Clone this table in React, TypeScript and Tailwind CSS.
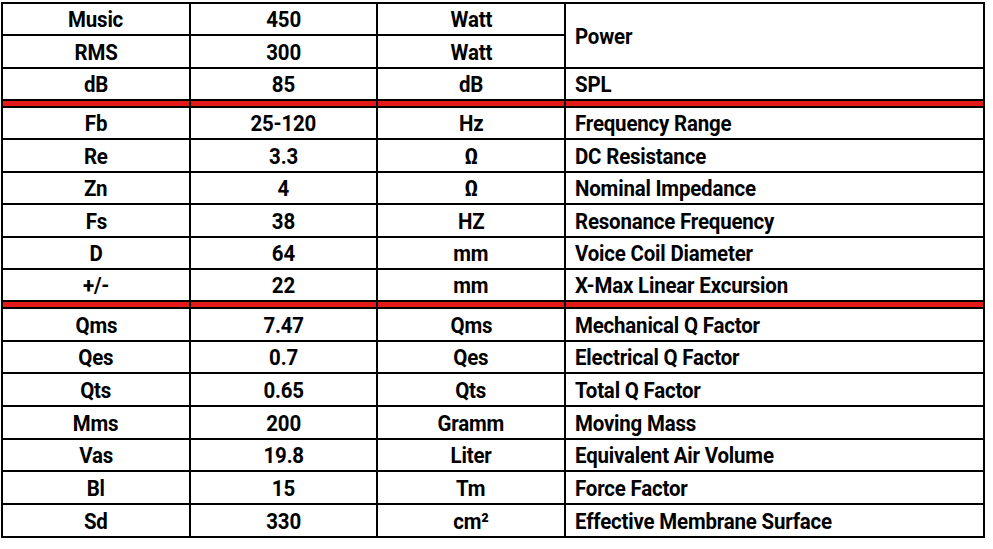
const font = { fontFamily: "Roboto, 'Liberation Sans', sans-serif" };

type Row = { a: string; b: string; c: string; d?: string; h: string };

const top: Row[] = [
  { a: "Music", b: "450", c: "Watt", h: "h-[30px]" },
  { a: "RMS", b: "300", c: "Watt", h: "h-[31px]" },
  { a: "dB", b: "85", c: "dB", d: "SPL", h: "h-[30px]" },
];

const mid: Row[] = [
  { a: "Fb", b: "25-120", c: "Hz", d: "Frequency Range", h: "h-[30px]" },
  { a: "Re", b: "3.3", c: "Ω", d: "DC Resistance", h: "h-[31px]" },
  { a: "Zn", b: "4", c: "Ω", d: "Nominal Impedance", h: "h-[30px]" },
  { a: "Fs", b: "38", c: "HZ", d: "Resonance Frequency", h: "h-[31px]" },
  { a: "D", b: "64", c: "mm", d: "Voice Coil Diameter", h: "h-[30px]" },
  { a: "+/-", b: "22", c: "mm", d: "X-Max Linear Excursion", h: "h-[30px]" },
];

const bottom: Row[] = [
  { a: "Qms", b: "7.47", c: "Qms", d: "Mechanical Q Factor", h: "h-[31px]" },
  { a: "Qes", b: "0.7", c: "Qes", d: "Electrical Q Factor", h: "h-[30px]" },
  { a: "Qts", b: "0.65", c: "Qts", d: "Total Q Factor", h: "h-[31px]" },
  { a: "Mms", b: "200", c: "Gramm", d: "Moving Mass", h: "h-[31px]" },
  { a: "Vas", b: "19.8", c: "Liter", d: "Equivalent Air Volume", h: "h-[30px]" },
  { a: "Bl", b: "15", c: "Tm", d: "Force Factor", h: "h-[31px]" },
  { a: "Sd", b: "330", c: "cm²", d: "Effective Membrane Surface", h: "h-[31px]" },
];

// narrow the glyphs a bit, the sheet uses a condensed face
const Txt = ({ t, left }: { t: string; left?: boolean }) => (
  <span className={"inline-block scale-x-[0.93] " + (left ? "origin-left" : "origin-center")}>{t}</span>
);

function Cells({ r }: { r: Row }) {
  const c = "bg-white flex items-center justify-center pt-[2px] " + r.h;
  return (
    <>
      <div className={c}><Txt t={r.a} /></div>
      <div className={c}><Txt t={r.b} /></div>
      <div className={c}><Txt t={r.c} /></div>
      {r.d !== undefined && (
        <div className={"bg-white flex items-center pl-[9px] pt-[2px] " + r.h}>
          <Txt t={r.d} left />
        </div>
      )}
    </>
  );
}

function RedBar() {
  return (
    <>
      <div className="h-[5px] bg-[#e41a1a]" />
      <div className="h-[5px] bg-[#e41a1a]" />
      <div className="h-[5px] bg-[#e41a1a]" />
      <div className="h-[5px] bg-[#e41a1a]" />
    </>
  );
}

export default function App() {
  return (
    <div className="w-[993px] h-[549px] bg-white pt-[2px] pl-[1px]" style={font}>
      <div className="grid grid-cols-[186px_185px_186px_417px] gap-[2px] p-[2px] bg-black w-fit text-[22px] font-bold text-black leading-none tracking-[-0.2px]">
        <Cells r={top[0]} />
        <div className="bg-white row-span-2 flex items-center pl-[9px] pt-[2px]">
          <Txt t="Power" left />
        </div>
        <Cells r={top[1]} />
        <Cells r={top[2]} />
        <RedBar />
        {mid.map((r) => (
          <Cells key={r.a} r={r} />
        ))}
        <RedBar />
        {bottom.map((r) => (
          <Cells key={r.a} r={r} />
        ))}
      </div>
    </div>
  );
}
